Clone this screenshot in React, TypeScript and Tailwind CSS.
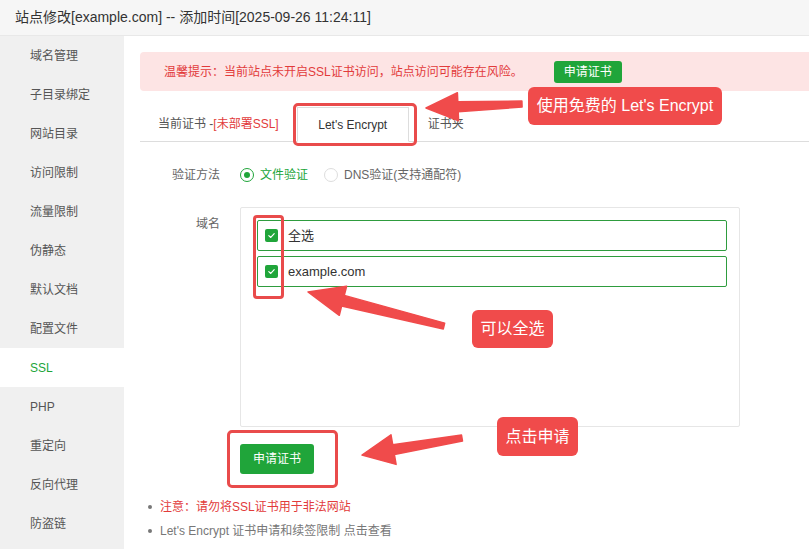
import * as React from "react"

const menu = [
  "域名管理",
  "子目录绑定",
  "网站目录",
  "访问限制",
  "流量限制",
  "伪静态",
  "默认文档",
  "配置文件",
  "SSL",
  "PHP",
  "重定向",
  "反向代理",
  "防盗链",
]

type Pt = [number, number]

// polygon for a tapered arrow, tail -> tip
const arrowPoints = (tail: Pt, tip: Pt, headLen: number, headHalf: number, neck: number, tailW: number) => {
  const dx = tip[0] - tail[0]
  const dy = tip[1] - tail[1]
  const len = Math.hypot(dx, dy)
  const ux = dx / len
  const uy = dy / len
  const nx = -uy
  const ny = ux
  const bx = tip[0] - ux * headLen
  const by = tip[1] - uy * headLen
  const pts: Pt[] = [
    [tail[0] + (nx * tailW) / 2, tail[1] + (ny * tailW) / 2],
    [bx + (nx * neck) / 2, by + (ny * neck) / 2],
    [bx + nx * headHalf, by + ny * headHalf],
    tip,
    [bx - nx * headHalf, by - ny * headHalf],
    [bx - (nx * neck) / 2, by - (ny * neck) / 2],
    [tail[0] - (nx * tailW) / 2, tail[1] - (ny * tailW) / 2],
  ]
  return pts.map((p) => `${p[0].toFixed(1)},${p[1].toFixed(1)}`).join(" ")
}

function Check() {
  return (
    <span className="flex h-[13px] w-[13px] items-center justify-center rounded-[2px] bg-[#20a53a]">
      <svg width="9" height="9" viewBox="0 0 10 10" fill="none">
        <path d="M2 5.2 L4.2 7.2 L8 3" stroke="white" strokeWidth="1.3" strokeLinecap="round" strokeLinejoin="round" />
      </svg>
    </span>
  )
}

export default function App() {
  return (
    <div className="relative h-[549px] w-[809px] overflow-hidden bg-white font-['Liberation_Sans','Noto_Sans_CJK_SC',sans-serif] text-[12px] text-[#555]">
      <div className="flex h-[36px] items-center border-b border-[#e8e8e8] bg-[#f6f6f6] pl-[15px] text-[14px] text-[#333]">
        站点修改[example.com] -- 添加时间[2025-09-26 11:24:11]
      </div>

      <div className="flex h-[513px]">
        {/* side menu */}
        <div className="w-[124px] shrink-0 bg-[#f0f0f0]">
          {menu.map((m) => (
            <div
              key={m}
              className={
                m === "SSL"
                  ? "flex h-[39px] items-center bg-white pl-[30px] text-[#20a53a]"
                  : "flex h-[39px] items-center pl-[30px] text-[#555]"
              }
            >
              {m}
            </div>
          ))}
        </div>

        {/* ssl panel */}
        <div className="flex min-w-0 flex-1 flex-col pl-[16px] pt-[16px]">
          <div className="flex h-[39px] w-[700px] items-center rounded-[4px] bg-[#fde4e4] pl-[24px] text-[#e23b3b]">
            <span>温馨提示：当前站点未开启SSL证书访问，站点访问可能存在风险。</span>
            <button className="ml-[31px] h-[22px] rounded-[3px] bg-[#20a53a] px-[10px] text-[12px] text-white">申请证书</button>
          </div>

          <div className="mt-[16px] flex h-[35px] w-[700px] items-stretch border-b border-[#ddd]">
            <div className="flex items-center px-[18px] text-[#555]">
              当前证书 -<span className="text-[#e23b3b]">[未部署SSL]</span>
            </div>
            <div className="-mb-px flex w-[112px] items-center justify-center border border-b-white border-[#ddd] bg-white text-[#333]">
              Let's Encrypt
            </div>
            <div className="flex items-center px-[19px] text-[#555]">证书夹</div>
          </div>

          <div className="mt-[18px] flex h-[30px] items-center">
            <div className="w-[100px] pr-[20px] text-right text-[#666]">验证方法</div>
            <span className="flex h-[14px] w-[14px] items-center justify-center rounded-full border border-[#20a53a]">
              <span className="h-[6px] w-[6px] rounded-full bg-[#20a53a]" />
            </span>
            <span className="ml-[6px] text-[#20a53a]">文件验证</span>
            <span className="ml-[16px] h-[14px] w-[14px] rounded-full border border-[#ddd]" />
            <span className="ml-[6px] text-[#666]">DNS验证(支持通配符)</span>
          </div>

          <div className="mt-[17px] flex">
            <div className="w-[100px] pr-[20px] pt-[8px] text-right text-[#666]">域名</div>
            <div className="flex h-[220px] w-[500px] flex-col gap-[5px] rounded-[2px] border border-[#e6e6e6] pl-[16px] pr-[12px] pt-[12px]">
              <div className="flex h-[31px] items-center gap-[10px] rounded-[2px] border border-[#2e9c3e] pl-[7px] text-[13px] text-[#333]">
                <Check />
                全选
              </div>
              <div className="flex h-[31px] items-center gap-[10px] rounded-[2px] border border-[#2e9c3e] pl-[7px] text-[13px] text-[#333]">
                <Check />
                example.com
              </div>
            </div>
          </div>

          <div className="mt-[17px] pl-[100px]">
            <button className="h-[30px] w-[74px] rounded-[3px] bg-[#20a53a] text-[12px] text-white">申请证书</button>
          </div>

          <ul className="mt-[21px] pl-[8px]">
            <li className="flex h-[24px] items-center gap-[8px] text-[#e23b3b]">
              <span className="h-[4px] w-[4px] rounded-full bg-[#777]" />
              注意：请勿将SSL证书用于非法网站
            </li>
            <li className="flex h-[24px] items-center gap-[8px] text-[#777]">
              <span className="h-[4px] w-[4px] rounded-full bg-[#777]" />
              Let's Encrypt 证书申请和续签限制 点击查看
            </li>
          </ul>
        </div>
      </div>

      {/* callouts */}
      <div className="pointer-events-none absolute left-[293px] top-[103px] h-[43px] w-[124px] rounded-[5px] border-[3px] border-[#e94b4b]" />
      <div className="pointer-events-none absolute left-[253px] top-[215px] h-[84px] w-[31px] rounded-[4px] border-[3px] border-[#e94b4b]" />
      <div className="pointer-events-none absolute left-[227px] top-[430px] h-[58px] w-[111px] rounded-[5px] border-[3px] border-[#e94b4b]" />

      <svg className="pointer-events-none absolute left-0 top-0" width="809" height="549">
        <polygon points={arrowPoints([522, 104], [426, 108], 32, 14, 10, 6)} fill="#f04b4b" strokeLinejoin="round" stroke="#f04b4b" strokeWidth="1.5" />
        <polygon points={arrowPoints([444, 326], [308, 292], 36, 15, 11, 6)} fill="#f04b4b" strokeLinejoin="round" stroke="#f04b4b" strokeWidth="1.5" />
        <polygon points={arrowPoints([462, 438], [362, 455], 32, 15, 10, 6)} fill="#f04b4b" strokeLinejoin="round" stroke="#f04b4b" strokeWidth="1.5" />
      </svg>

      <div className="absolute left-[528px] top-[87px] flex h-[38px] w-[194px] items-center justify-center rounded-[6px] bg-[#f04b4b] text-[16px] text-white">
        使用免费的 Let's Encrypt
      </div>
      <div className="absolute left-[472px] top-[310px] flex h-[38px] w-[81px] items-center justify-center rounded-[6px] bg-[#f04b4b] text-[16px] text-white">
        可以全选
      </div>
      <div className="absolute left-[497px] top-[417px] flex h-[39px] w-[81px] items-center justify-center rounded-[6px] bg-[#f04b4b] text-[16px] text-white">
        点击申请
      </div>
    </div>
  )
}
